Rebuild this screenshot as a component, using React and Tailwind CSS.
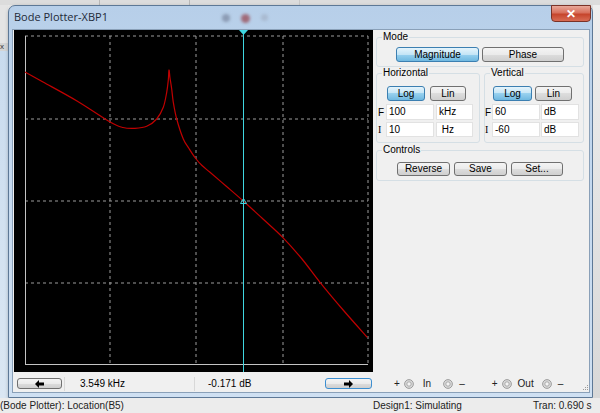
import React from "react";

// measured trace of the magnitude curve, in plot coordinates
const curve = [
  [11, 42], [29, 52], [63, 71], [96, 92], [109, 97.5], [121, 98.3], [132.7, 96.3],
  [142.7, 89], [149.3, 77.3], [152.7, 62.3], [154.3, 50], [155, 40], [156, 48],
  [157.7, 59], [159.3, 72.3], [162.7, 89], [169.3, 109], [175, 118.5], [181.7, 128.5],
  [188, 135.5], [196, 142.3], [212, 156], [229.3, 171], [249, 189], [268.7, 207.3],
  [288, 229], [306, 252.3], [330, 281], [353.3, 307.3],
];

const smooth = (p) => {
  let d = `M${p[0][0]} ${p[0][1]}`;
  for (let i = 0; i < p.length - 1; i++) {
    const a = p[i - 1] || p[i];
    const b = p[i];
    const c = p[i + 1];
    const e = p[i + 2] || c;
    const c1 = [b[0] + (c[0] - a[0]) / 6, b[1] + (c[1] - a[1]) / 6];
    const c2 = [c[0] - (e[0] - b[0]) / 6, c[1] - (e[1] - b[1]) / 6];
    d += ` C${c1[0]} ${c1[1]} ${c2[0]} ${c2[1]} ${c[0]} ${c[1]}`;
  }
  return d;
};

const Btn = ({ children, active, className }) => (
  <div
    className={`flex items-center justify-center rounded-[3px] border text-[10px] leading-none text-black ${
      active
        ? "border-[#3c7fb1] bg-[linear-gradient(#e5f4fc_0%,#c4e5f6_50%,#98d1ef_50%,#6fb8e0_100%)]"
        : "border-[#707070] bg-[linear-gradient(#f4f4f4_0%,#ebebeb_50%,#dddddd_50%,#cfcfcf_100%)]"
    } ${className}`}
  >
    {children}
  </div>
);

const Field = ({ children, className }) => (
  <div className={`flex items-center bg-white border border-[#e2e2e2] pl-[2px] text-[10px] leading-none ${className}`}>
    {children}
  </div>
);

const Group = ({ label, className, children }) => (
  <fieldset className={`border border-[#d5dfe5] rounded-[3px] ${className}`}>
    <legend className="ml-[5px] px-[1px] text-[10px] leading-[12px] text-black">{label}</legend>
    {children}
  </fieldset>
);

const Terminal = () => (
  <svg width="10" height="10" viewBox="0 0 10 10">
    <circle cx="5" cy="5" r="4.4" fill="#d8d8d8" stroke="#969696" strokeWidth="0.9" />
    <circle cx="5" cy="5" r="2.2" fill="#f4f4f4" stroke="#a4a4a4" strokeWidth="0.9" />
  </svg>
);

const Arrow = ({ dir }) => (
  <svg width="9" height="8" viewBox="0 0 9 8">
    <path
      d={dir === "left" ? "M0 4 L4 0 L4 2.5 L9 2.5 L9 5.5 L4 5.5 L4 8 Z" : "M9 4 L5 0 L5 2.5 L0 2.5 L0 5.5 L5 5.5 L5 8 Z"}
      fill="#000"
    />
  </svg>
);

const Plot = () => {
  const vx = [96, 182, 269, 354];
  const hy = [6, 89, 171, 253];
  return (
    <svg width="359" height="342" viewBox="0 0 359 342" className="block">
      <rect width="359" height="342" fill="#000" />
      {vx.map((x) => (
        <line key={x} x1={x} y1="6" x2={x} y2="334" stroke="#9c9c9c" strokeDasharray="3 3" />
      ))}
      {hy.map((y) => (
        <line key={y} x1="11" y1={y} x2="354" y2={y} stroke="#9c9c9c" strokeDasharray="3 3" />
      ))}
      <line x1="11.5" y1="6" x2="11.5" y2="334" stroke="#c4c4c4" />
      <line x1="11" y1="334.5" x2="354" y2="334.5" stroke="#c4c4c4" />
      <path d={smooth(curve)} fill="none" stroke="#c00000" strokeWidth="1.2" strokeLinejoin="round" />
      <line x1="229.5" y1="0" x2="229.5" y2="342" stroke="#3fd6e0" />
      <polygon points="225,0 234,0 229.5,5" fill="#3fd6e0" />
      <polygon points="226.5,173.5 232.5,173.5 229.5,168.5" fill="none" stroke="#3fd6e0" />
    </svg>
  );
};

export default function App() {
  return (
    <div className="w-[600px] h-[413px] overflow-hidden flex flex-col bg-[#e8e8e8] font-['Liberation_Sans',Arial,sans-serif] text-black">
      {/* strip of the main application above the window */}
      <div className="h-[5px] shrink-0 bg-[#dcdcdc] flex">
        <div className="w-[100px] border-r border-[#b8b8b8]" />
        <div className="w-[90px] border-r border-[#b8b8b8]" />
        <div className="w-[110px] border-r border-[#c8c8c8]" />
        <div className="flex-1" />
      </div>

      <div className="flex flex-1 min-h-0">
        {/* left edge of the main application */}
        <div className="w-[8px] flex flex-col">
          <div className="h-[38px] bg-[#e4e4e4]" />
          <div className="h-[8px] bg-[#d4d4d4] text-[8px] leading-[8px] text-[#333]">x</div>
          <div className="flex-1 bg-[linear-gradient(#c9dbee,#dbe7f3)]" />
        </div>

        {/* bode plotter window */}
        <div className="w-[585px] flex flex-col rounded-t-[7px] border border-[#5d7896] bg-[linear-gradient(#b7cfe9,#c3d8ef_40%,#cfe0f2)] shadow-[1px_2px_4px_rgba(0,0,0,0.35)]">
          {/* title bar */}
          <div className="h-[23px] shrink-0 flex items-start">
            <div className="pl-[5px] pt-[4px] text-[11px] leading-[13px] font-['Open_Sans',sans-serif] text-[#1e2a38]">
              Bode Plotter-XBP1
            </div>
            <div className="ml-[114px] mt-[8px] flex gap-[11px]">
              <div className="w-[8px] h-[8px] rounded-full bg-[#8c9bb4] blur-[1.5px]" />
              <div className="w-[9px] h-[9px] rounded-full bg-[#a06a78] blur-[1.5px]" />
              <div className="w-[7px] h-[7px] rounded-full bg-[#a9bad0] blur-[1.5px]" />
            </div>
            <div className="ml-auto mr-[1px] -mt-[1px] w-[40px] h-[17px] rounded-b-[4px] border border-[#7a3328] bg-[linear-gradient(#e9a99a,#d8705c_45%,#c6452c_55%,#d86c54)] flex items-center justify-center text-white text-[12px] font-bold leading-none">
              ✕
            </div>
          </div>

          {/* client area */}
          <div className="flex-1 ml-[3px] mr-[2px] mb-[4px] border border-[#8aa0b8] bg-[#f0f0f0] flex flex-col">
            <div className="flex items-start">
              <div className="ml-[1px]">
                <Plot />
              </div>

              {/* control panel */}
              <div className="ml-[3px] mt-[1px] flex flex-col w-[208px]">
                <Group label="Mode" className="pb-[4px]">
                  <div className="mt-[4px] flex justify-center gap-[3px]">
                    <Btn active className="w-[83px] h-[15px]">Magnitude</Btn>
                    <Btn className="w-[82px] h-[15px]">Phase</Btn>
                  </div>
                </Group>

                <div className="flex gap-[4px]">
                  <Group label="Horizontal" className="w-[104px] pb-[5px]">
                    <div className="mt-[7px] pl-[10px] flex gap-[5px]">
                      <Btn active className="w-[38px] h-[15px]">Log</Btn>
                      <Btn className="w-[36px] h-[15px]">Lin</Btn>
                    </div>
                    <div className="mt-[3px] flex items-center">
                      <span className="w-[9px] pl-[1px] text-[10px]">F</span>
                      <Field className="w-[48px] h-[16px]">100</Field>
                      <Field className="ml-[2px] w-[37px] h-[16px]">kHz</Field>
                    </div>
                    <div className="mt-[2px] flex items-center">
                      <span className="w-[9px] pl-[1px] text-[10px] font-['Liberation_Serif',serif]">I</span>
                      <Field className="w-[48px] h-[15px]">10</Field>
                      <Field className="ml-[2px] w-[37px] h-[15px]">&nbsp;Hz</Field>
                    </div>
                  </Group>

                  <Group label="Vertical" className="w-[100px] pb-[5px]">
                    <div className="mt-[7px] pl-[8px] flex gap-[3px]">
                      <Btn active className="w-[39px] h-[15px]">Log</Btn>
                      <Btn className="w-[37px] h-[15px]">Lin</Btn>
                    </div>
                    <div className="mt-[3px] flex items-center">
                      <span className="w-[7px] text-[10px]">F</span>
                      <Field className="w-[48px] h-[16px]">60</Field>
                      <Field className="ml-[1px] w-[38px] h-[16px]">dB</Field>
                    </div>
                    <div className="mt-[2px] flex items-center">
                      <span className="w-[7px] text-[10px] font-['Liberation_Serif',serif]">I</span>
                      <Field className="w-[48px] h-[15px]">-60</Field>
                      <Field className="ml-[1px] w-[38px] h-[15px]">dB</Field>
                    </div>
                  </Group>
                </div>

                <Group label="Controls" className="mt-[1px] pb-[4px]">
                  <div className="mt-[6px] flex justify-center gap-[4px]">
                    <Btn className="w-[53px] h-[14px]">Reverse</Btn>
                    <Btn className="w-[53px] h-[14px]">Save</Btn>
                    <Btn className="w-[52px] h-[14px]">Set...</Btn>
                  </div>
                </Group>
              </div>
            </div>

            {/* readout bar */}
            <div className="mt-[6px] h-[11px] flex items-center text-[10px] leading-none">
              <Btn className="ml-[4px] w-[45px] h-[11px]">
                <Arrow dir="left" />
              </Btn>
              <div className="ml-[2px] w-[130px] h-[14px] border-l border-[#d8d8d8] flex items-center pl-[15px]">3.549 kHz</div>
              <div className="w-[131px] h-[14px] border-l border-[#d8d8d8] flex items-center pl-[13px]">-0.171 dB</div>
              <div className="w-[47px] h-[11px] rounded-[3px] border border-[#3c8fd1] bg-[linear-gradient(#f4f4f4_0%,#ebebeb_50%,#dddddd_50%,#cfcfcf_100%)] flex items-center justify-center">
                <Arrow dir="right" />
              </div>
              <div className="ml-[22px] flex items-center text-[#222]">
                <span>+</span>
                <span className="ml-[4px]"><Terminal /></span>
                <span className="ml-[9px]">In</span>
                <span className="ml-[12px]"><Terminal /></span>
                <span className="ml-[6px]">–</span>
              </div>
              <div className="ml-[27px] flex items-center text-[#222]">
                <span>+</span>
                <span className="ml-[4px]"><Terminal /></span>
                <span className="ml-[6px]">Out</span>
                <span className="ml-[8px]"><Terminal /></span>
                <span className="ml-[6px]">–</span>
              </div>
              <div className="ml-auto mr-[1px] self-end mb-[-1px] grid grid-cols-3 gap-[1px]">
                <span className="w-[1px] h-[1px]" />
                <span className="w-[1px] h-[1px]" />
                <span className="w-[1px] h-[1px] bg-[#9a9a9a]" />
                <span className="w-[1px] h-[1px]" />
                <span className="w-[1px] h-[1px] bg-[#9a9a9a]" />
                <span className="w-[1px] h-[1px] bg-[#9a9a9a]" />
                <span className="w-[1px] h-[1px] bg-[#9a9a9a]" />
                <span className="w-[1px] h-[1px] bg-[#9a9a9a]" />
                <span className="w-[1px] h-[1px] bg-[#9a9a9a]" />
              </div>
            </div>
          </div>
        </div>

        {/* right edge of the main application */}
        <div className="flex-1 bg-[linear-gradient(#eeeeee,#d8d8d8)]" />
      </div>

      {/* status bar of the main application */}
      <div className="h-[15px] shrink-0 flex items-start pt-[2px] text-[10px] leading-[11px] text-[#222] bg-[#ececec]">
        <span className="w-[373px]">(Bode Plotter): Location(B5)</span>
        <span className="w-[160px]">Design1: Simulating</span>
        <span>Tran: 0.690 s</span>
      </div>
    </div>
  );
}
